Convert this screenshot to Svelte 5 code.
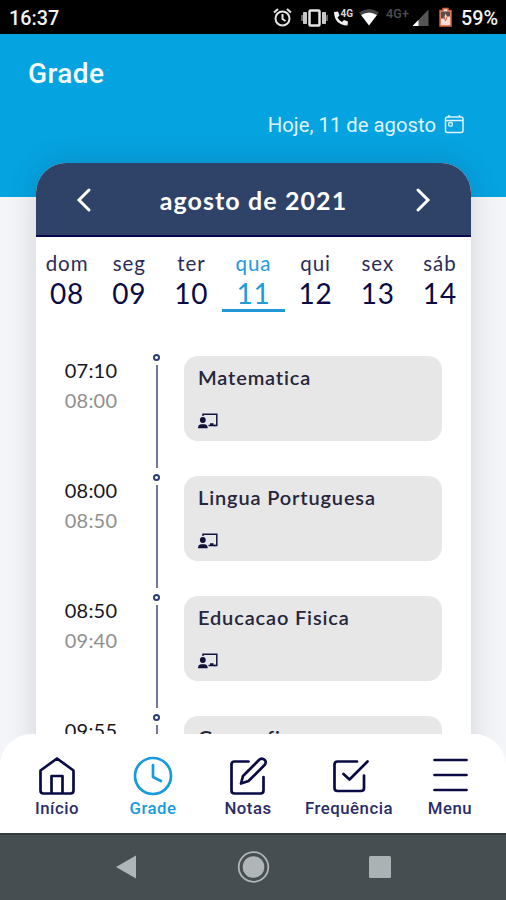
<script>
  let selected = 3

  const days = [
    { name: 'dom', number: '08' },
    { name: 'seg', number: '09' },
    { name: 'ter', number: '10' },
    { name: 'qua', number: '11' },
    { name: 'qui', number: '12' },
    { name: 'sex', number: '13' },
    { name: 'sáb', number: '14' },
  ]

  const lessons = [
    { start: '07:10', end: '08:00', subject: 'Matematica' },
    { start: '08:00', end: '08:50', subject: 'Lingua Portuguesa' },
    { start: '08:50', end: '09:40', subject: 'Educacao Fisica' },
    { start: '09:55', end: '10:45', subject: 'Geografia' },
  ]

  const tabs = [
    { id: 'home', label: 'Início' },
    { id: 'clock', label: 'Grade' },
    { id: 'edit', label: 'Notas' },
    { id: 'check', label: 'Frequência' },
    { id: 'menu', label: 'Menu' },
  ]
  let activeTab = 'clock'
</script>

<div class="screen">
  <div class="status">
    <span class="time">16:37</span>
    <svg width="186" height="34" viewBox="0 0 186 34">
      <!-- alarm -->
      <g fill="none" stroke="#e4e4e4" stroke-width="2">
        <circle cx="11.500" cy="18.500" r="7" />
        <path d="M11.500 14v5l3 2M3 12.500l4-3.500M20 12.500L16 9" />
      </g>
      <!-- vibrate -->
      <rect x="38.500" y="10.500" width="10" height="15" rx="1" fill="none" stroke="#e4e4e4" stroke-width="2.500" />
      <path d="M32.500 12.500h3v11h-3zM51.500 12.500h3v11h-3zM31 15v6M56 15v6" fill="#c8c8c8" stroke="#c8c8c8" />
      <!-- call over 4G -->
      <path d="M63 12l4-.5 1.500 4-2 2q1.500 3 4.500 4.500l2-2 4 1.500-.5 4q-13-.5-13.500-13.500z" fill="#f0f0f0" />
      <text x="69.500" y="17" font-size="10" font-weight="700" fill="#d8d8d8">4G</text>
      <!-- wifi -->
      <path d="M88 12.500q10-7 20 0l-2 2.500q-8-5-16 0z" fill="#444" />
      <path d="M90 15q8-5 16 0l-8 10.500z" fill="#fff" />
      <text x="115" y="18" font-size="12.500" fill="#505050" textLength="23">4G+</text>
      <!-- signal -->
      <path d="M157.500 9.500v16.500h-16z" fill="#555" />
      <path d="M147.500 20v6h-6z" fill="#fff" />
      <!-- battery -->
      <path d="M169 10.500h3V8.500h5v2h3v15.500h-11z" fill="#f7ddd5" stroke="#d9603c" stroke-width="1.500" />
      <path d="M170 11.500h9v5h-3l-1.500-3-1.500 5h-3z" fill="#5b4a45" />
      <path d="M173 16.500l1.500 4.500 1.500-4.500" fill="none" stroke="#d9603c" />
    </svg>
    <span class="battery">59%</span>
  </div>

  <main>
    <header>
      <h1>Grade</h1>
      <div class="today">
        Hoje, 11 de agosto
        <svg width="20" height="20" viewBox="0 0 20 20" fill="none" stroke="currentColor">
          <rect x="1.500" y="2" width="17.500" height="15.500" rx="2" stroke-width="1.500" />
          <path d="M1.500 5.500H19M5 0v2M15.500 0v2" stroke-width="1.500" />
          <rect x="4.700" y="7.500" width="3.600" height="3.600" rx="1" stroke-width="1.300" />
        </svg>
      </div>
    </header>

    <section class="calendar">
      <div class="month">
        <button aria-label="Mês anterior">
          <svg width="16" height="26" viewBox="0 0 16 26"><path d="M13 3L3 13l10 10" /></svg>
        </button>
        <h2>agosto de 2021</h2>
        <button aria-label="Próximo mês">
          <svg width="16" height="26" viewBox="0 0 16 26"><path d="M3 3l10 10L3 23" /></svg>
        </button>
      </div>

      <div class="week">
        {#each days as day, i}
          <button class="day" class:selected={i === selected} on:click={() => (selected = i)}>
            <span class="name">{day.name}</span>
            <span class="number">{day.number}</span>
          </button>
        {/each}
      </div>

      <div class="lessons">
        {#each lessons as lesson}
          <article>
            <div class="hours">
              <span>{lesson.start}</span>
              <span class="end">{lesson.end}</span>
            </div>
            <div class="line"><i></i></div>
            <div class="subject">
              <h3>{lesson.subject}</h3>
              <svg width="20" height="16" viewBox="0 0 20 16">
                <path d="M5 3V1.200h13.800v11.300h-3" fill="none" stroke="#14163f" stroke-width="1.500" />
                <circle cx="4.800" cy="7" r="2.900" fill="#10123a" />
                <path d="M0 15.300q0-4 3.500-4h2.700q3.500 0 3.500 4zM10.500 13.200v-1.500h1.500v-1.500h3.500v1.500h2v1.500z" fill="#10123a" />
              </svg>
            </div>
          </article>
        {/each}
      </div>
    </section>
  </main>

  <nav>
    {#each tabs as tab}
      <button class:active={tab.id === activeTab} on:click={() => (activeTab = tab.id)}>
        <svg width="40" height="40" viewBox="0 0 40 40">
          {#if tab.id === 'home'}
            <path d="M3.500 14.500L20 2.500l16.500 12v20q0 3-3 3h-27q-3 0-3-3zM14.500 37V20h11v17" />
          {:else if tab.id === 'clock'}
            <circle cx="20" cy="20" r="18" />
            <path d="M20 9v12l8 4" />
          {:else if tab.id === 'edit'}
            <path d="M20.500 5.500h-14q-3 0-3 3v26q0 3 3 3h26q3 0 3-3V21" />
            <path d="M31.500 3.500q2.700-2 5 .3t.3 5L20.500 25l-7.500 2.500L15 20z" />
          {:else if tab.id === 'check'}
            <path d="M28 5.500H8.500q-3 0-3 3v23.500q0 3 3 3H32q3 0 3-3V19.500" />
            <path d="M14.500 18l6 5.500L38.500 5.500" />
          {:else}
            <path d="M4.500 4h32M4.500 19h32M4.500 34h32" />
          {/if}
        </svg>
        <span>{tab.label}</span>
      </button>
    {/each}
  </nav>

  <div class="system">
    <svg width="22" height="26" viewBox="0 0 22 26"><path d="M1 13L21 1.500v23z" fill="#b0b6b7" /></svg>
    <svg width="34" height="34" viewBox="0 0 34 34">
      <circle cx="17.500" cy="17" r="14.800" fill="none" stroke="#b0b6b7" stroke-width="1.800" />
      <circle cx="17.500" cy="17" r="10.800" fill="#b0b6b7" />
    </svg>
    <svg width="22" height="22" viewBox="0 0 22 22"><rect width="22" height="22" rx="1.500" fill="#abb2b3" /></svg>
  </div>
</div>

<style>
  :global(body) {
    margin: 0;
  }
  .screen {
    width: 506px;
    height: 900px;
    display: flex;
    flex-direction: column;
    overflow: hidden;
    background-color: #f3f5f9;
    color: #0a0b45;
    font-family: Lato, sans-serif;
  }
  h1,
  h2,
  h3 {
    margin: 0;
  }
  button {
    padding: 0;
    border: none;
    background: none;
    color: inherit;
    font: inherit;
    cursor: pointer;
  }
  svg {
    display: block;
    flex: none;
  }
  .status {
    flex: none;
    box-sizing: border-box;
    height: 34px;
    padding: 2px 8px 0 9px;
    display: flex;
    align-items: center;
    background-color: #000;
    color: #f2f2f2;
    font: 500 19.8px Roboto, sans-serif;
  }
  .status svg {
    margin: -2px 4px 0 auto;
  }
  main {
    flex: 1;
    min-height: 0;
    margin-bottom: -32px;
    display: flex;
    flex-direction: column;
    overflow: hidden;
  }
  header {
    flex: none;
    box-sizing: border-box;
    height: 163px;
    padding: 23px 42px 0 28px;
    background-color: #06a3e1;
    color: #f5fbff;
    font-family: Roboto, sans-serif;
  }
  h1 {
    font-size: 28px;
    font-weight: 500;
    line-height: 34px;
    letter-spacing: 0.4px;
  }
  .today {
    margin-top: 21px;
    display: flex;
    justify-content: flex-end;
    align-items: center;
    gap: 8px;
    font-size: 20.3px;
    line-height: 26px;
    color: #dff4fd;
  }
  .calendar {
    flex: 1;
    min-height: 0;
    margin: -34px 35px 0 36px;
    border-radius: 30px 30px 0 0;
    background-color: #fff;
    box-shadow: 0 0 32px rgba(0, 0, 0, 0.14);
  }
  .month {
    box-sizing: border-box;
    height: 74px;
    padding: 2px 40px 0;
    display: flex;
    justify-content: space-between;
    align-items: center;
    border-radius: 30px 30px 0 0;
    border-bottom: 2px solid #07084f;
    background-color: #2f4268;
    color: #fff;
  }
  .month path {
    fill: none;
    stroke: #fff;
    stroke-width: 3;
    stroke-linecap: round;
  }
  h2 {
    font-size: 25px;
    font-weight: 700;
    letter-spacing: 1.1px;
  }
  .week {
    display: grid;
    grid-template-columns: repeat(7, 1fr);
    padding-top: 13px;
  }
  .day {
    height: 62px;
    box-sizing: border-box;
    display: flex;
    flex-direction: column;
    align-items: center;
    border-bottom: 3px solid transparent;
  }
  .name {
    font-size: 20.5px;
    line-height: 26px;
    letter-spacing: 0.9px;
    color: #2b2c59;
  }
  .number {
    font-size: 28px;
    line-height: 34px;
    letter-spacing: 0.8px;
  }
  .selected {
    border-color: #2497d6;
  }
  .selected span {
    color: #209bdc;
  }
  .lessons {
    padding-top: 41px;
  }
  article {
    height: 120px;
    display: flex;
  }
  .hours {
    width: 110px;
    padding-top: 2px;
    display: flex;
    flex-direction: column;
    align-items: center;
    font-size: 20px;
    line-height: 30px;
    letter-spacing: 0.2px;
    color: #17171f;
  }
  .end {
    color: #8f8f8f;
  }
  .line {
    width: 21px;
    display: flex;
    flex-direction: column;
    align-items: center;
    gap: 4px;
  }
  .line i {
    width: 3px;
    height: 3px;
    margin-top: 1px;
    border: 2px solid #2c3f78;
    border-radius: 50%;
  }
  .line::after {
    content: '';
    width: 2px;
    height: 103px;
    background-color: #73759b;
  }
  .subject {
    box-sizing: border-box;
    width: 258px;
    height: 85px;
    margin: 3px 0 0 17px;
    padding: 8px 14px;
    border-radius: 14px;
    background-color: #e7e7e7;
  }
  h3 {
    margin-bottom: 23px;
    font-size: 20px;
    font-weight: 600;
    line-height: 26px;
    letter-spacing: 0.85px;
    color: #26263a;
  }
  nav {
    z-index: 1;
    flex: none;
    box-sizing: border-box;
    height: 99px;
    padding: 22px 9px 0;
    display: grid;
    grid-template-columns: 96px 96px 94px 108px 94px;
    border-radius: 32px 32px 0 0;
    background-color: #fff;
    font-family: Roboto, sans-serif;
  }
  nav button {
    display: flex;
    flex-direction: column;
    align-items: center;
    align-self: start;
  }
  nav svg {
    fill: none;
    stroke: currentColor;
    stroke-width: 2.7;
    stroke-linecap: round;
    stroke-linejoin: round;
  }
  nav span {
    font-size: 16.8px;
    font-weight: 500;
    line-height: 24px;
    letter-spacing: 0.5px;
    color: #2a2c68;
  }
  .active,
  .active span {
    color: #169bdd;
  }
  .system {
    flex: none;
    box-sizing: border-box;
    height: 67px;
    padding: 0 115px 2px;
    display: flex;
    justify-content: space-between;
    align-items: center;
    border-top: 2px solid #343b3f;
    background-color: #464e52;
  }
</style>
